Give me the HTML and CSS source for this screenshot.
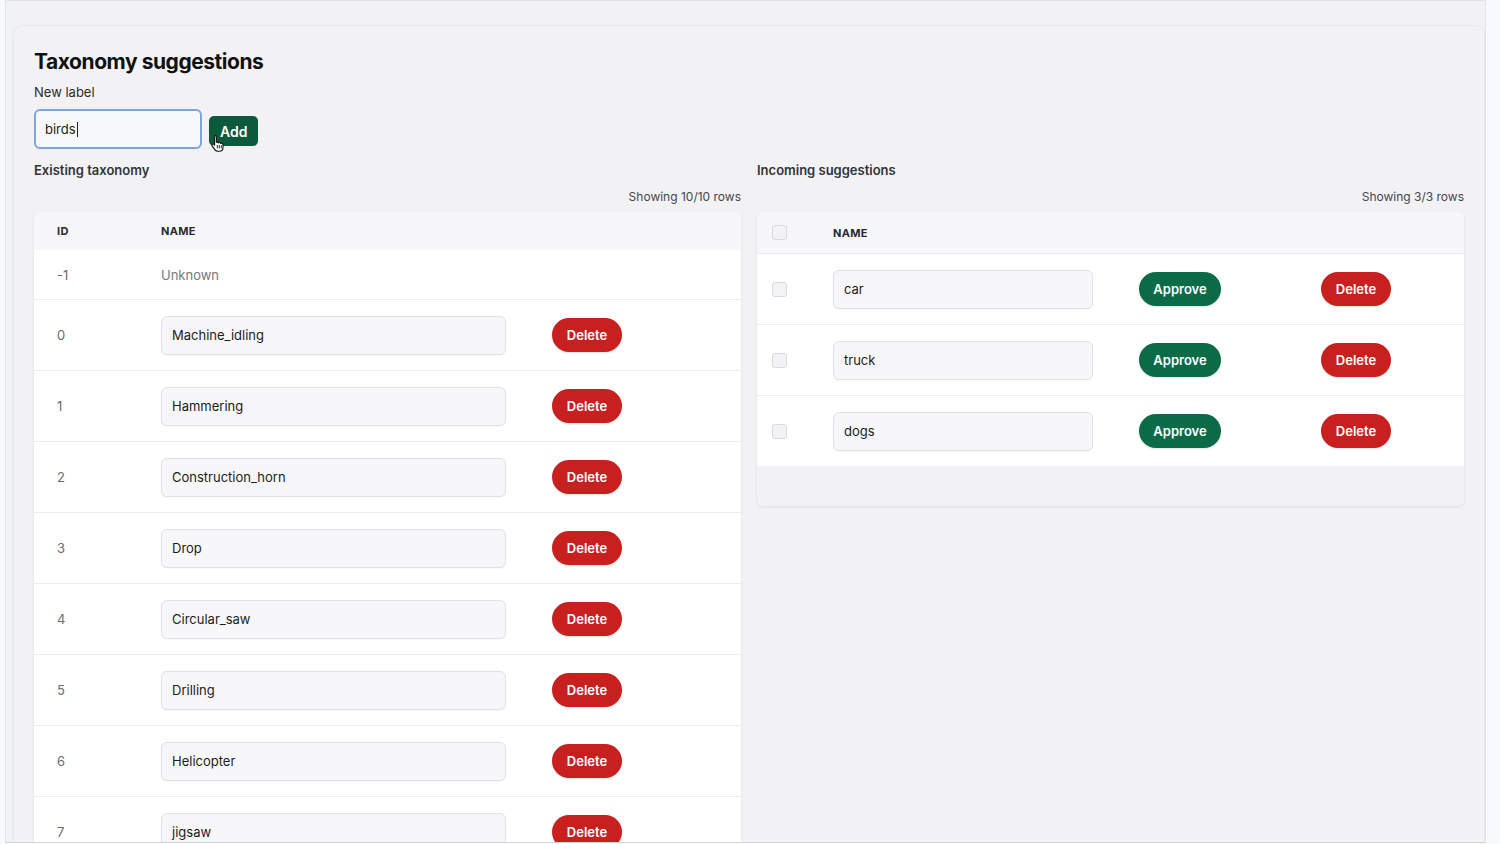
FILE: index.html
```html
<!DOCTYPE html>
<html lang="en">

<head>
  <meta charset="UTF-8">
  <meta name="viewport" content="width=device-width, initial-scale=1.0">
  <title>Taxonomy suggestions</title>
  <link rel="stylesheet" href="styles.css">
</head>

<body>
  <div class="frame">
    <main class="card">
      <h1>Taxonomy suggestions</h1>
      <label class="field-label">New label</label>
      <div class="new-label">
        <div class="text-box focused">birds<span class="caret"></span></div>
        <button class="btn btn-add">Add</button>
        <!-- pointer over the Add button -->
        <svg class="pointer" width="14" height="18" viewBox="0 0 14 18">
          <path d="M4 1.5c.8 0 1.4.6 1.4 1.4v5.2l.6-.1c.7 0 1.2.4 1.3 1 .3-.4.8-.6 1.3-.5.6.1 1 .5 1.1 1 .3-.3.8-.4 1.2-.3.7.2 1.1.8 1.1 1.5v2.8c0 2-1.4 3.8-3.7 3.8H7c-1.4 0-2.4-.6-3.2-1.7L1.2 11.9c-.4-.6-.3-1.3.3-1.7.5-.3 1.2-.2 1.6.3l.5.7V2.9c0-.8.6-1.4 1.4-1.4z" fill="#fff" stroke="#111" stroke-width="1.1" stroke-linejoin="round" />
          <path d="M6.3 11v3.4M8.3 11v3.4M10.3 11.2v3.2" stroke="#111" stroke-width=".9" />
        </svg>
      </div>

      <div class="columns">
        <section class="column">
          <h2>Existing taxonomy</h2>
          <p class="rows-count">Showing 10/10 rows</p>
          <div class="table taxonomy">
            <div class="row head">
              <span>ID</span>
              <span>NAME</span>
            </div>
            <div class="row fixed">
              <span class="id">-1</span>
              <span class="unknown">Unknown</span>
            </div>
            <div class="row">
              <span class="id">0</span>
              <div class="text-box">Machine_idling</div>
              <button class="btn btn-delete">Delete</button>
            </div>
            <div class="row">
              <span class="id">1</span>
              <div class="text-box">Hammering</div>
              <button class="btn btn-delete">Delete</button>
            </div>
            <div class="row">
              <span class="id">2</span>
              <div class="text-box">Construction_horn</div>
              <button class="btn btn-delete">Delete</button>
            </div>
            <div class="row">
              <span class="id">3</span>
              <div class="text-box">Drop</div>
              <button class="btn btn-delete">Delete</button>
            </div>
            <div class="row">
              <span class="id">4</span>
              <div class="text-box">Circular_saw</div>
              <button class="btn btn-delete">Delete</button>
            </div>
            <div class="row">
              <span class="id">5</span>
              <div class="text-box">Drilling</div>
              <button class="btn btn-delete">Delete</button>
            </div>
            <div class="row">
              <span class="id">6</span>
              <div class="text-box">Helicopter</div>
              <button class="btn btn-delete">Delete</button>
            </div>
            <div class="row">
              <span class="id">7</span>
              <div class="text-box">jigsaw</div>
              <button class="btn btn-delete">Delete</button>
            </div>
          </div>
        </section>

        <section class="column">
          <h2>Incoming suggestions</h2>
          <p class="rows-count">Showing 3/3 rows</p>
          <div class="table suggestions">
            <div class="row head">
              <span class="check"></span>
              <span>NAME</span>
            </div>
            <div class="row">
              <span class="check"></span>
              <div class="text-box">car</div>
              <span><button class="btn btn-approve">Approve</button></span>
              <span><button class="btn btn-delete">Delete</button></span>
            </div>
            <div class="row">
              <span class="check"></span>
              <div class="text-box">truck</div>
              <span><button class="btn btn-approve">Approve</button></span>
              <span><button class="btn btn-delete">Delete</button></span>
            </div>
            <div class="row">
              <span class="check"></span>
              <div class="text-box">dogs</div>
              <span><button class="btn btn-approve">Approve</button></span>
              <span><button class="btn btn-delete">Delete</button></span>
            </div>
            <div class="table-foot"></div>
          </div>
        </section>
      </div>
    </main>
  </div>
</body>

</html>
```

FILE: styles.css
```css
body {
  margin: 0;
  height: 844px;
  overflow: hidden;
  font-family: Inter, "Noto Sans", sans-serif;
  background-color: #f8f9fa;
  color: #1b1b1f;
}

.frame {
  box-sizing: border-box;
  margin-left: 5px;
  width: 1481px;
  height: 843px;
  padding-top: 25px;
  background: #f2f2f5;
  border: 1px solid #e2e3e7;
  border-bottom-color: #d6d7db;
  overflow: hidden;
}

.card {
  box-sizing: border-box;
  margin-left: 8px;
  width: 1470px;
  min-height: 900px;
  padding: 23px 20px 0;
  background: #f2f2f5;
  border-radius: 8px 8px 0 0;
  box-shadow: 0 0 0 1px rgba(0, 0, 0, .025), 0 1px 4px rgba(0, 0, 0, .05);
}

h1 {
  margin: 0;
  font-size: 21px;
  line-height: 26px;
  font-weight: 700;
  letter-spacing: -.45px;
  color: #111;
}

.field-label {
  display: block;
  margin-top: 8px;
  font-size: 13px;
  line-height: 18px;
  color: #2a2a2e;
}

.new-label {
  position: relative;
  display: flex;
  align-items: flex-start;
  gap: 7px;
  margin-top: 8px;
}

.new-label .text-box {
  width: 168px;
  height: 40px;
}

.pointer {
  position: absolute;
  left: 177px;
  top: 25px;
}

.text-box {
  box-sizing: border-box;
  display: flex;
  align-items: center;
  height: 39px;
  padding: 0 10px;
  font-size: 13px;
  color: #1d1d20;
  background: #f7f7f9;
  border: 1px solid #e1e1e5;
  border-radius: 6px;
  box-shadow: 0 1px 1px rgba(0, 0, 0, .03);
}

.text-box.focused {
  border: 2px solid #7ea6d6;
  background: #f6f8fb;
  padding: 0 9px;
}

.caret {
  display: inline-block;
  width: 1px;
  height: 15px;
  margin-left: 1px;
  background: #222;
}

.btn {
  border: none;
  color: white;
  font-family: inherit;
  font-size: 13px;
  font-weight: 600;
  cursor: pointer;
}

.btn-add {
  height: 30px;
  margin-top: 7px;
  padding: 0 11px;
  font-size: 14px;
  background: #0c5a3b;
  border-radius: 5px;
}

.btn-delete {
  width: 70px;
  height: 34px;
  background: #c81f1f;
  border-radius: 17px;
  box-shadow: 0 1px 2px rgba(0, 0, 0, .12);
}

.btn-approve {
  width: 82px;
  height: 34px;
  background: #0b6b47;
  border-radius: 17px;
  box-shadow: 0 1px 2px rgba(0, 0, 0, .12);
}

.columns {
  display: grid;
  grid-template-columns: 707px 707px;
  gap: 16px;
  margin-top: 12px;
}

h2 {
  margin: 0;
  font-size: 13px;
  line-height: 18px;
  font-weight: 600;
  color: #333338;
}

.rows-count {
  margin: 10px 0 7px;
  text-align: right;
  font-size: 12px;
  line-height: 16px;
  color: #46464c;
}

.table {
  border-radius: 6px;
  overflow: hidden;
  background: #f2f2f5;
  box-shadow: 0 1px 3px rgba(0, 0, 0, .09);
}

.row {
  display: grid;
  align-items: center;
  background: white;
  border-top: 1px solid #ececef;
  font-size: 13px;
}

.row.head {
  background: #f7f7f9;
  border-top: none;
  font-size: 11px;
  font-weight: 700;
  letter-spacing: .3px;
  color: #2a2a2e;
}

/* existing taxonomy: id / name / action */
.taxonomy .row {
  grid-template-columns: 104px 391px 1fr;
  height: 70px;
  padding-left: 23px;
}

.taxonomy .row.head {
  height: 38px;
}

.taxonomy .row.fixed {
  height: 49px;
  border-top: none;
}

.taxonomy .text-box {
  width: 345px;
}

.id {
  color: #6b6b72;
}

.unknown {
  color: #77777d;
}

/* incoming suggestions: check / name / approve / delete */
.suggestions .row {
  grid-template-columns: 61px 306px 182px 1fr;
  height: 70px;
  padding-left: 15px;
}

.suggestions .row.head {
  height: 41px;
}

.suggestions .text-box {
  width: 260px;
}

.check {
  box-sizing: border-box;
  width: 15px;
  height: 15px;
  background: #f3f3f5;
  border: 1px solid #dadade;
  border-radius: 3px;
}

.table-foot {
  height: 40px;
  background: #f2f2f5;
}
```
